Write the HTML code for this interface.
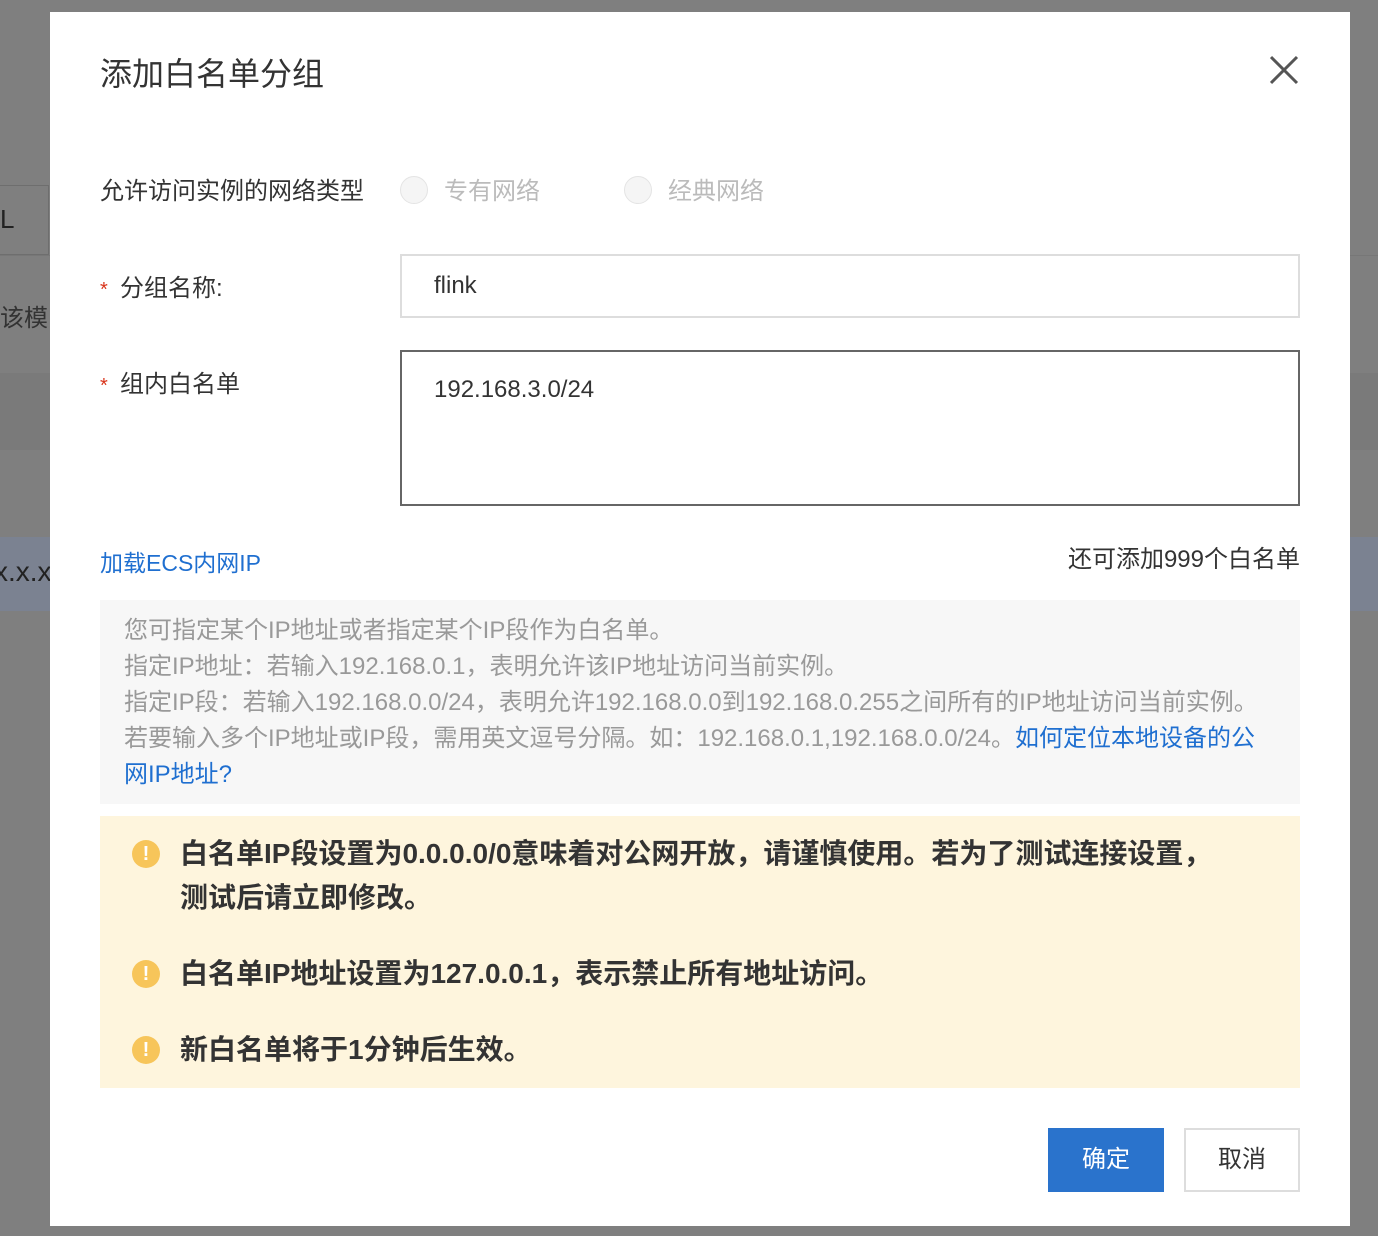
<!DOCTYPE html>
<html><head><meta charset="utf-8"><style>
*{margin:0;padding:0;box-sizing:border-box}
body{width:1378px;height:1236px;background:#7f7f7f;position:relative;overflow:hidden;font-family:"Liberation Sans","Noto Sans CJK SC",sans-serif;color:#333}
.a{position:absolute}
.m{left:50px;top:12px;width:1300px;height:1214px;background:#fff}
.lbl{font-size:24px;color:#333;white-space:nowrap}
.radio{width:28px;height:28px;border-radius:50%;border:1px solid #e4e4e4;background:#f5f5f5}
.info{left:100px;top:600px;width:1200px;height:204px;background:#f7f7f7;padding:13px 24px;font-size:24px;line-height:36px;color:#999;white-space:nowrap}
.warn{left:100px;top:816px;width:1200px;height:272px;background:#fef5dd}
.ic{width:28px;height:28px;border-radius:50%;background:#f7c55a;color:#fff;font-weight:bold;font-size:20px;text-align:center;line-height:28px}
.wt{font-size:28px;font-weight:bold;color:#333;line-height:44px;white-space:nowrap}
</style></head><body>
<div class="a" style="left:0;top:185px;width:49px;height:70px;border:1px solid #6e6e6e;border-left:none"></div>
<div class="a" style="left:0;top:204px;font-size:26px;color:#222">L</div>
<div class="a" style="left:0;top:255px;width:1378px;height:1px;background:#777"></div>
<div class="a" style="left:0;top:298px;font-size:24px;color:#333">该模</div>
<div class="a" style="left:0;top:373px;width:1378px;height:77px;background:#7a7a7a"></div>
<div class="a" style="left:0;top:537px;width:1378px;height:74px;background:#7b8291"></div>
<div class="a" style="left:-6px;top:556px;font-size:28px;color:#222">x.x.x</div>
<div class="a m"></div>
<div class="a" style="left:100px;top:49px;font-size:32px;color:#333">添加白名单分组</div>
<svg class="a" style="left:1268px;top:54px" width="32" height="32"><path d="M3 3L29 29M29 3L3 29" stroke="#555" stroke-width="3"/></svg>
<div class="a lbl" style="left:100px;top:171px">允许访问实例的网络类型</div>
<div class="a radio" style="left:400px;top:176px"></div>
<div class="a lbl" style="left:444px;top:171px;color:#bbb">专有网络</div>
<div class="a radio" style="left:624px;top:176px"></div>
<div class="a lbl" style="left:668px;top:171px;color:#bbb">经典网络</div>
<div class="a lbl" style="left:100px;top:268px"><span style="color:#d9341b;font-size:20px;display:inline-block;width:20px">*</span>分组名称:</div>
<div class="a" style="left:400px;top:254px;width:900px;height:64px;border:2px solid #ddd;padding:16px 32px;font-size:24px">flink</div>
<div class="a lbl" style="left:100px;top:364px"><span style="color:#d9341b;font-size:20px;display:inline-block;width:20px">*</span>组内白名单</div>
<div class="a" style="left:400px;top:350px;width:900px;height:156px;border:2px solid #666;padding:24px 32px;font-size:24px">192.168.3.0/24</div>
<div class="a" style="left:100px;top:544px;font-size:23px;color:#1f6fd0">加载ECS内网IP</div>
<div class="a" style="left:1000px;top:539px;width:300px;text-align:right;font-size:24px;color:#333;white-space:nowrap">还可添加999个白名单</div>
<div class="a info">您可指定某个IP地址或者指定某个IP段作为白名单。<br>指定IP地址：若输入192.168.0.1，表明允许该IP地址访问当前实例。<br>指定IP段：若输入192.168.0.0/24，表明允许192.168.0.0到192.168.0.255之间所有的IP地址访问当前实例。<br>若要输入多个IP地址或IP段，需用英文逗号分隔。如：192.168.0.1,192.168.0.0/24。<span style="color:#1f6fd0">如何定位本地设备的公<br>网IP地址?</span></div>
<div class="a warn"></div>
<div class="a ic" style="left:132px;top:840px">!</div>
<div class="a wt" style="left:180px;top:832px">白名单IP段设置为0.0.0.0/0意味着对公网开放，请谨慎使用。若为了测试连接设置，<br>测试后请立即修改。</div>
<div class="a ic" style="left:132px;top:960px">!</div>
<div class="a wt" style="left:180px;top:952px">白名单IP地址设置为127.0.0.1，表示禁止所有地址访问。</div>
<div class="a ic" style="left:132px;top:1036px">!</div>
<div class="a wt" style="left:180px;top:1028px">新白名单将于1分钟后生效。</div>
<div class="a" style="left:1048px;top:1128px;width:116px;height:64px;background:#2a73cc;color:#fff;font-size:24px;text-align:center;line-height:64px">确定</div>
<div class="a" style="left:1184px;top:1128px;width:116px;height:64px;border:2px solid #ddd;color:#333;font-size:24px;text-align:center;line-height:60px">取消</div>
</body></html>
